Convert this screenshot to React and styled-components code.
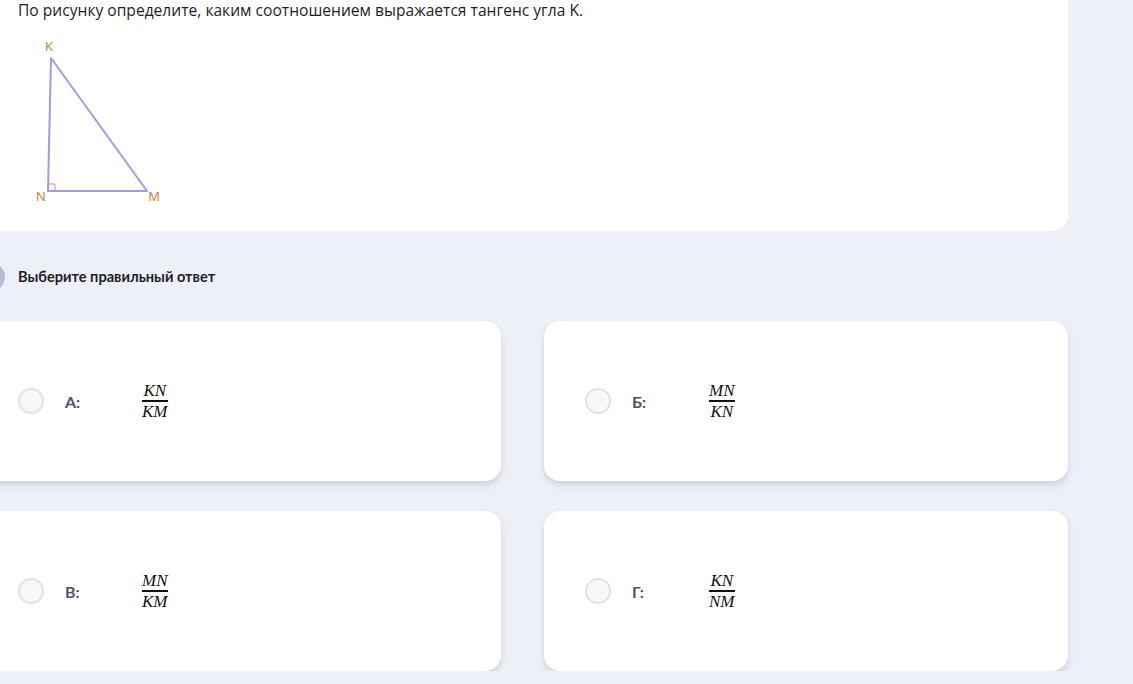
import React from "react";
import styled, { createGlobalStyle } from "styled-components";

const GlobalStyle = createGlobalStyle`
  html, body {
    margin: 0;
    padding: 0;
    background-color: #eef0f8;
    overflow: hidden;
  }
  body {
    font-family: Lato, "Noto Sans", sans-serif;
  }
`;

const Page = styled.div`
  width: 1091px;
  margin-left: -23px;
  display: flex;
  flex-direction: column;
`;

const QuestionCard = styled.div`
  background-color: #fff;
  border-radius: 0 0 16px 16px;
  padding: 0 41px 23px;
`;

const QuestionText = styled.div`
  font-family: "Open Sans", Lato, sans-serif;
  font-size: 15.6px;
  line-height: 20px;
  color: #1e1e24;
`;

const Figure = styled.svg`
  display: block;
  margin-top: 16px;
`;

const PromptRow = styled.div`
  display: flex;
  flex-direction: row;
  align-items: center;
  gap: 13px;
  margin-top: 31px;
  height: 29px;
`;

const HintDot = styled.div`
  width: 28px;
  height: 28px;
  border-radius: 50%;
  background-color: #b7bbd3;
`;

const Prompt = styled.div`
  font-size: 14.6px;
  font-weight: 700;
  color: #1d1d2b;
`;

const Answers = styled.div`
  display: grid;
  grid-template-columns: 1fr 1fr;
  column-gap: 43px;
  row-gap: 30px;
  margin-top: 30px;
`;

const AnswerCard = styled.div`
  height: 160px;
  background-color: #fff;
  border-radius: 16px;
  box-shadow: 0 4px 6px rgba(150, 155, 170, 0.35);
  display: flex;
  flex-direction: row;
  align-items: center;
  padding: 0 41px;
`;

const Radio = styled.div`
  width: 22px;
  height: 22px;
  border-radius: 50%;
  border: 2px solid #e2e2e4;
  background-color: #f8f8f8;
  flex-shrink: 0;
`;

const Letter = styled.div`
  width: 77px;
  margin-left: 21px;
  font-size: 16px;
  font-weight: 700;
  color: #4c526a;
`;

const Fraction = styled.div`
  display: inline-flex;
  flex-direction: column;
  align-items: center;
  font-family: "Liberation Serif", "Times New Roman", serif;
  font-style: italic;
  font-size: 17px;
  line-height: 17px;
  color: #111;
`;

const Bar = styled.div`
  align-self: stretch;
  height: 2px;
  background-color: #111;
  margin: 1px 0 1px;
`;

const answers = [
  { letter: "А:", top: "KN", bottom: "KM" },
  { letter: "Б:", top: "MN", bottom: "KN" },
  { letter: "В:", top: "MN", bottom: "KM" },
  { letter: "Г:", top: "KN", bottom: "NM" },
];

function Triangle() {
  const orange = "#d9742a";
  return (
    <Figure width="150" height="172" viewBox="0 0 150 172">
      <polygon
        points="33,22 30,155 129,155"
        fill="none"
        stroke="#ae95dc"
        strokeWidth="2"
        strokeLinejoin="round"
      />
      <polyline points="30,148 37,148 37,155" fill="none" stroke="#ae95dc" strokeWidth="1" />
      <text x="31" y="15" fontSize="13" fill={orange} textAnchor="middle" fontFamily="'Open Sans', sans-serif">K</text>
      <text x="23" y="165" fontSize="13" fill={orange} textAnchor="middle" fontFamily="'Open Sans', sans-serif">N</text>
      <text x="136" y="165" fontSize="13" fill={orange} textAnchor="middle" fontFamily="'Open Sans', sans-serif">M</text>
    </Figure>
  );
}

export default function App() {
  return (
    <>
      <GlobalStyle />
      <Page>
        <QuestionCard>
          <QuestionText>
            По рисунку определите, каким соотношением выражается тангенс угла K.
          </QuestionText>
          <Triangle />
        </QuestionCard>
        <PromptRow>
          <HintDot />
          <Prompt>Выберите правильный ответ</Prompt>
        </PromptRow>
        <Answers>
          {answers.map((a) => (
            <AnswerCard key={a.letter}>
              <Radio />
              <Letter>{a.letter}</Letter>
              <Fraction>
                <span>{a.top}</span>
                <Bar />
                <span>{a.bottom}</span>
              </Fraction>
            </AnswerCard>
          ))}
        </Answers>
      </Page>
    </>
  );
}
